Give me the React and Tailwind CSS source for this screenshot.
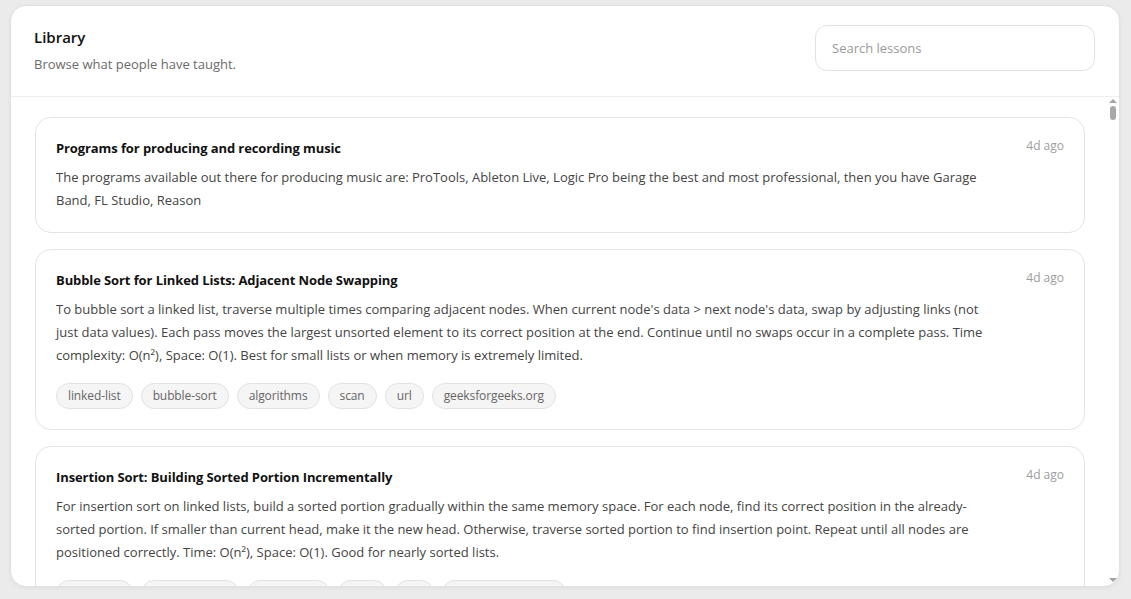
import React from "react";

const lessons = [
  {
    title: "Programs for producing and recording music",
    body: "The programs available out there for producing music are: ProTools, Ableton Live, Logic Pro being the best and most professional, then you have Garage Band, FL Studio, Reason",
    tags: [],
  },
  {
    title: "Bubble Sort for Linked Lists: Adjacent Node Swapping",
    body: "To bubble sort a linked list, traverse multiple times comparing adjacent nodes. When current node's data > next node's data, swap by adjusting links (not just data values). Each pass moves the largest unsorted element to its correct position at the end. Continue until no swaps occur in a complete pass. Time complexity: O(n²), Space: O(1). Best for small lists or when memory is extremely limited.",
    tags: ["linked-list", "bubble-sort", "algorithms", "scan", "url", "geeksforgeeks.org"],
  },
  {
    title: "Insertion Sort: Building Sorted Portion Incrementally",
    body: "For insertion sort on linked lists, build a sorted portion gradually within the same memory space. For each node, find its correct position in the already-sorted portion. If smaller than current head, make it the new head. Otherwise, traverse sorted portion to find insertion point. Repeat until all nodes are positioned correctly. Time: O(n²), Space: O(1). Good for nearly sorted lists.",
    tags: ["linked-list", "insertion-sort", "algorithms", "scan", "url", "geeksforgeeks.org"],
  },
];

function Card({ lesson }) {
  return (
    <div className="shrink-0 rounded-2xl border border-[#e4e4e4] bg-white px-5 pt-5 pb-5">
      <div className="flex items-start justify-between gap-6">
        <div className="min-w-0 flex-1">
          <div className="text-[13px] font-bold leading-5 tracking-[-0.1px] text-[#111]">{lesson.title}</div>
          <p className="mt-2 text-[13px] leading-[23px] text-[#444]">{lesson.body}</p>
        </div>
        <div className="shrink-0 text-[12px] leading-4 text-[#9d9d9d]">4d ago</div>
      </div>
      {lesson.tags.length > 0 && (
        <div className="mt-4 flex flex-wrap gap-2">
          {lesson.tags.map((t) => (
            <span
              key={t}
              className="rounded-full border border-[#e2e2e2] bg-[#f5f5f5] px-[11px] py-[3px] text-[12px] leading-[18px] tracking-[-0.1px] text-[#666]"
            >
              {t}
            </span>
          ))}
        </div>
      )}
    </div>
  );
}

export default function App() {
  return (
    <div
      className="flex h-screen w-full flex-col bg-[#ebebeb] pt-[5px] pb-[12px] pl-[10px] pr-[11px]"
      style={{ fontFamily: '"Open Sans", "Noto Sans", sans-serif' }}
    >
      <div className="flex min-h-0 flex-1 flex-col overflow-hidden rounded-2xl border border-[#e2e2e2] bg-white shadow-[0_1px_4px_rgba(0,0,0,0.06)]">
        <div className="flex shrink-0 items-start justify-between border-b border-[#eeeeee] pl-[23px] pr-6 pt-[19px] pb-[22px]">
          <div className="pt-[2px]">
            <div className="text-[15px] font-semibold leading-5 text-[#111]">Library</div>
            <div className="mt-[7px] text-[13px] leading-5 text-[#6b6b6b]">Browse what people have taught.</div>
          </div>
          <input
            placeholder="Search lessons"
            className="h-[46px] w-[280px] rounded-xl border border-[#e2e2e2] bg-white px-4 text-[13px] text-[#333] outline-none placeholder:text-[#9a9a9a]"
          />
        </div>
        <div className="flex min-h-0 flex-1">
          <div className="flex min-w-0 flex-1 flex-col gap-4 overflow-hidden pt-5 pl-6 pr-[22px]">
            {lessons.map((l) => (
              <Card key={l.title} lesson={l} />
            ))}
          </div>
          <div className="flex w-[12px] shrink-0 flex-col items-center pt-[2px] pb-[4px]">
            <div className="h-0 w-0 border-x-[4px] border-b-[4px] border-x-transparent border-b-[#a3a3a3]" />
            <div className="mt-[3px] h-[14px] w-[6px] rounded-full bg-[#a8a8a8]" />
            <div className="flex-1" />
            <div className="h-0 w-0 border-x-[4px] border-t-[4px] border-x-transparent border-t-[#a3a3a3]" />
          </div>
        </div>
      </div>
    </div>
  );
}
